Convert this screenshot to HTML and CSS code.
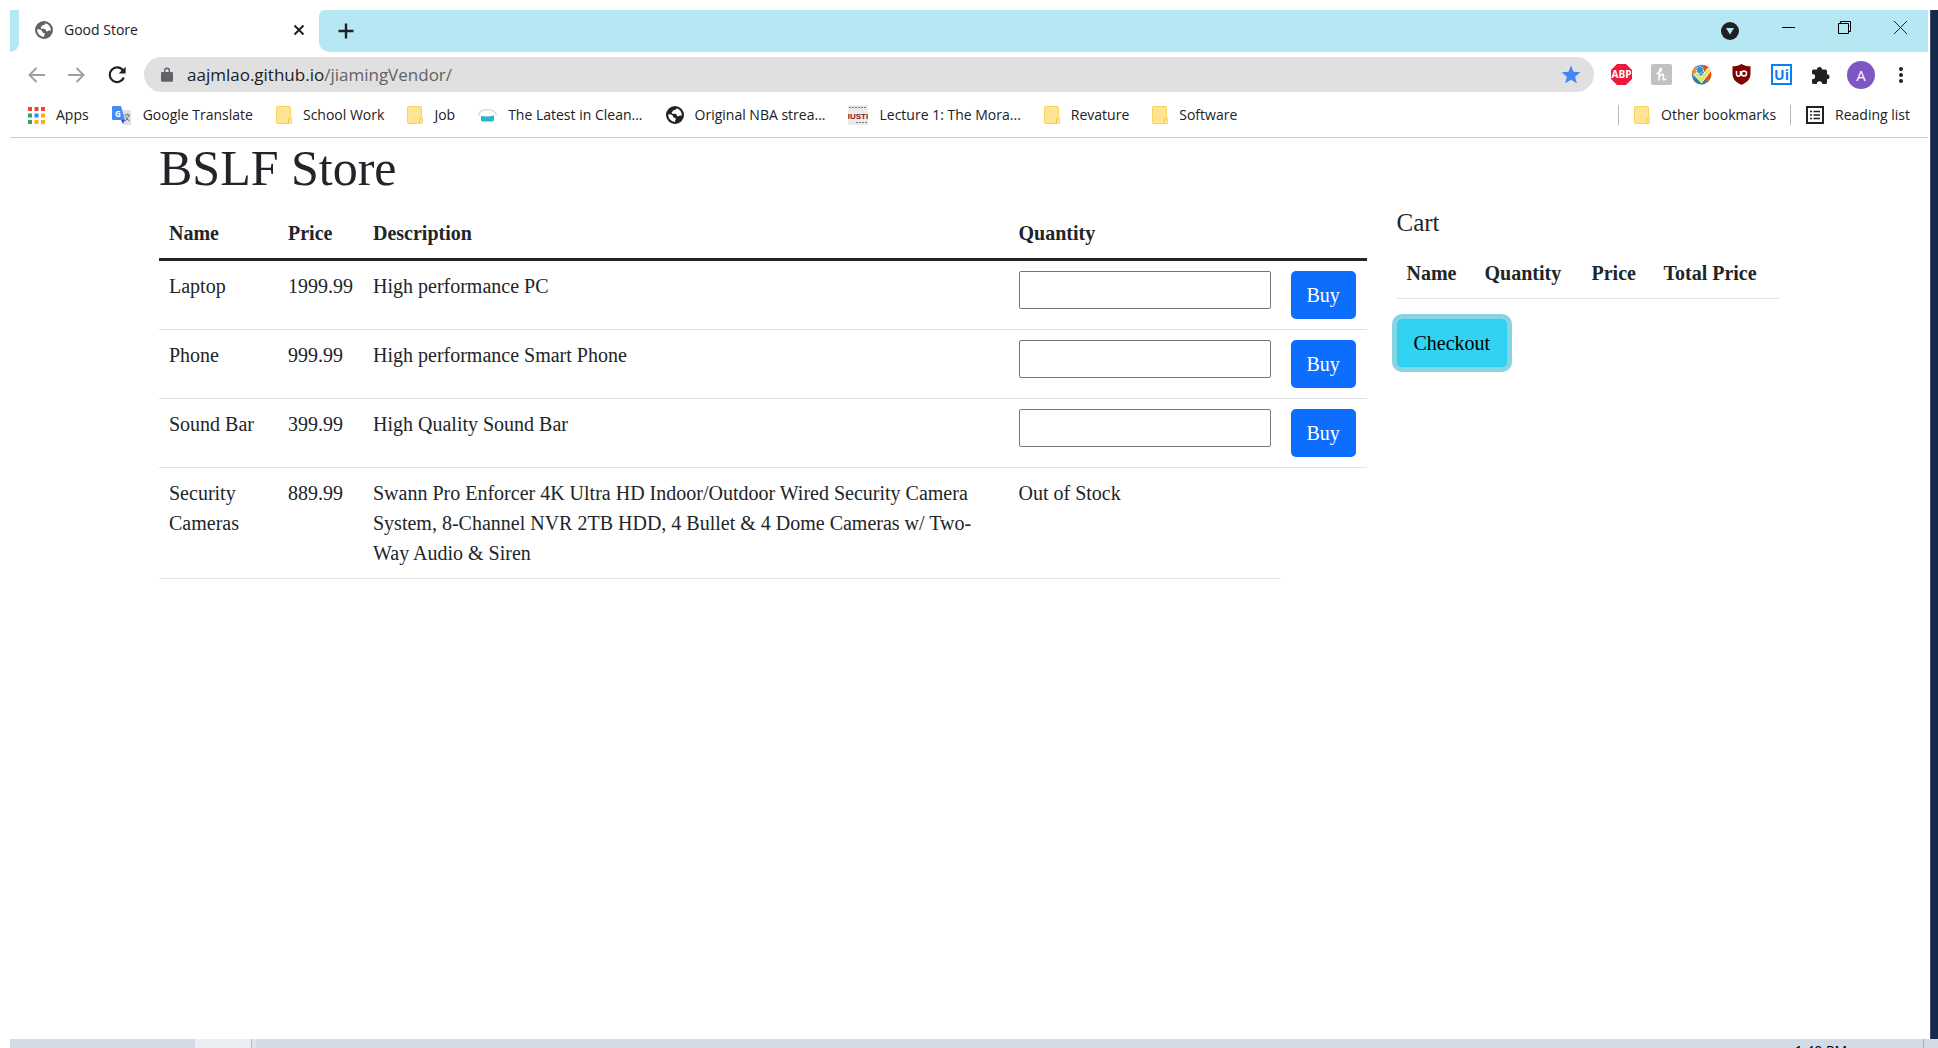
FILE: index.html
```html
<!DOCTYPE html>
<html lang="en">
<head>
<meta charset="utf-8">
<title>Good Store</title>
<link rel="stylesheet" href="styles.css">
</head>
<body>
<svg class="defs" aria-hidden="true">
  <symbol id="globe" viewBox="0 0 18 18"><circle cx="9" cy="9" r="9" fill="currentColor"/><path d="M10.5 2.2c-.3 1.500-1.500 1.800-3 2.100-.8.200-.6 1.500-1.500 1.800-.5.300-.5 1.600.5 1.700 1.500.2 3-.2 4 .7.800.9.200 1.800 1.300 2 1 .1 1.200-.9 2.200-1 .9 0 1.500.2 1.800.1A7 7 0 0 0 10.500 2.200ZM2.200 8.200c1.600 0 3.500.1 4.400 1.200.9 1 .6 1.900 1.500 2.300.9.300 1.900.2 1.700 1.400-.2 1-.9 1.200-.7 2.800A7 7 0 0 1 2.200 8.200Z" fill="#fff"/></symbol>
  <symbol id="folder" viewBox="0 0 16 18"><path d="M1.500.5h12a1 1 0 0 1 1 1V12h.5a.8.800 0 0 1 .5.800v3.700a1 1 0 0 1-1 1h-13a1 1 0 0 1-1-1v-15a1 1 0 0 1 1-1Z" fill="#ffe493" stroke="#f6d35f"/><path d="M12.500 17v-3.500q0-1.500 1.500-1.500" fill="none" stroke="#f0c843"/></symbol>
</svg>
<div class="desktop">
  <div class="window">
    <header class="chrome">
      <div class="tabstrip">
        <div class="edge"></div>
        <div class="tab">
          <svg class="i18 gray"><use href="#globe"/></svg>
          <span class="tab-title">Good Store</span>
          <button class="icon-btn" aria-label="Close tab"><svg width="12" height="12" viewBox="0 0 12 12"><path d="M1.500 1.500l9 9M10.500 1.500l-9 9" stroke="#202124" stroke-width="2"/></svg></button>
        </div>
        <div class="strip">
          <button class="icon-btn" aria-label="New tab"><svg width="16" height="16" viewBox="0 0 16 16"><path d="M8 .5v15M.5 8h15" stroke="#202124" stroke-width="2.400"/></svg></button>
          <div class="caption">
            <button class="icon-btn" aria-label="Search tabs"><svg width="18" height="18" viewBox="0 0 18 18"><circle cx="9" cy="9" r="9" fill="#202124"/><path d="M5 6h8l-4 6.500Z" fill="#b5e8f2"/></svg></button>
            <button class="icon-btn up" aria-label="Minimize"><svg width="13" height="13" viewBox="0 0 13 13"><path d="M0 6.500h13" stroke="#000"/></svg></button>
            <button class="icon-btn up" aria-label="Restore"><svg width="13" height="13" viewBox="0 0 13 13"><path d="M.5 2.500h10v10H.5ZM2.500 2.500v-2h10v10h-2" fill="none" stroke="#000"/></svg></button>
            <button class="icon-btn up" aria-label="Close"><svg width="13" height="13" viewBox="0 0 13 13"><path d="M0 0l13 13M13 0L0 13" stroke="#222"/></svg></button>
          </div>
        </div>
      </div>
      <div class="toolbar">
        <div class="nav">
          <button class="icon-btn" aria-label="Back"><svg width="17" height="16" viewBox="0 0 17 16"><path d="M17 8H2M8.500 1l-7 7 7 7" fill="none" stroke="#a0a0a0" stroke-width="2"/></svg></button>
          <button class="icon-btn" aria-label="Forward"><svg width="17" height="16" viewBox="0 0 17 16"><path d="M0 8h15M8.500 1l7 7-7 7" fill="none" stroke="#a0a0a0" stroke-width="2"/></svg></button>
          <button class="icon-btn" aria-label="Reload"><svg width="18" height="18" viewBox="0 0 18 18"><path d="M15 4.500A7.300 7.300 0 1 0 15.800 11.500" fill="none" stroke="#202124" stroke-width="2.200"/><path d="M17.600.8v6.800h-7Z" fill="#202124"/></svg></button>
        </div>
        <div class="address">
          <svg width="12" height="15" viewBox="0 0 12 15"><path d="M1.500 5H3V3.500a3 3 0 0 1 6 0V5h1.500A1.300 1.300 0 0 1 12 6.300v7.200a1.300 1.300 0 0 1-1.300 1.300H1.300A1.300 1.300 0 0 1 0 13.500V6.300A1.300 1.300 0 0 1 1.500 5ZM4.400 5h3.200V3.500a1.600 1.600 0 0 0-3.200 0Z" fill="#5f6368"/></svg>
          <span class="url">aajmlao.github.io<span class="path">/jiamingVendor/</span></span>
          <svg width="20" height="19" viewBox="0 0 20 19"><path d="M10 .5l2.500 6.300 6.800.5-5.200 4.400 1.700 6.600L10 14.700l-5.800 3.600 1.700-6.600L.7 7.300l6.800-.5Z" fill="#4285f4"/></svg>
        </div>
        <div class="extensions">
          <svg width="21" height="21" viewBox="0 0 21 21"><path d="M6 0h9l6 6v9l-6 6H6l-6-6V6Z" fill="#f0173c"/><text x="10.500" y="14" text-anchor="middle" class="g-abp">ABP</text></svg>
          <svg width="21" height="21" viewBox="0 0 21 21"><rect width="21" height="21" rx="2" fill="#c2c2c2"/><path d="M5.500 9.500c3 0 6-3.500 4.500-4.800C8.500 4 8 9 8 16.500M8 13.500c1-3 4.500-4.500 4.500-2 0 2-1.200 4.500.2 4.500 1 0 1.800-.8 2.300-1.500" fill="none" stroke="#fff" stroke-width="1.600"/></svg>
          <svg width="21" height="21" viewBox="0 0 21 21"><circle cx="10.500" cy="10.500" r="9.800" fill="#348bc6"/><path d="M13 1a9.800 9.800 0 0 1 3 17.500L13 9Z" fill="#e84c1f"/><path d="M2 15a9.800 9.800 0 0 0 12 4.800l1-5Z" fill="#2f7f9a"/><path d="M1 9a9.800 9.800 0 0 1 4-7l2 6-5 5Z" fill="#ef8b35"/><circle cx="9" cy="6" r="3.500" fill="#3b8fd0" stroke="#d7ecfa" stroke-dasharray="2 1"/><path d="M3 10.500l3-2 4 4.500L17 4l3 2.500L10.500 19Z" fill="#dce75a" stroke="#f7f9d8"/></svg>
          <svg width="19" height="21" viewBox="0 0 19 21"><path d="M9.500 0C12 1.600 15 2.300 18.500 2.300V10c0 5-3.500 8.500-9 10.800C4 18.500.5 15 .5 10V2.300C4 2.300 7 1.600 9.500 0Z" fill="#800000"/><path d="M4.500 7v3a2 2 0 0 0 4 .3V7" fill="none" stroke="#fff" stroke-width="1.500"/><circle cx="12" cy="9.500" r="2.500" fill="none" stroke="#fff" stroke-width="1.500"/></svg>
          <svg width="21" height="21" viewBox="0 0 21 21"><rect x="1" y="1" width="19" height="19" fill="#fff" stroke="#0b7ff4" stroke-width="2"/><text x="10.500" y="16" text-anchor="middle" class="g-ui">Ui</text></svg>
          <svg width="18" height="18" viewBox="0 0 18 18"><path d="M5 3.500a2.500 2.500 0 0 1 5 0h3.500A1.500 1.500 0 0 1 15 5v3.200a2.500 2.500 0 0 1 0 5v3.300a1.500 1.500 0 0 1-1.500 1.500h-3.300a2.700 2.700 0 0 0-5.400 0H1.500A1.500 1.500 0 0 1 0 16.500v-3.300h.5a2.600 2.600 0 0 0 0-5.200H0V5a1.500 1.500 0 0 1 1.500-1.500Z" fill="#202124"/></svg>
          <button class="avatar">A</button>
          <button class="icon-btn" aria-label="Menu"><svg width="4" height="16" viewBox="0 0 4 16"><g fill="#202124"><circle cx="2" cy="2" r="2"/><circle cx="2" cy="8" r="2"/><circle cx="2" cy="14" r="2"/></g></svg></button>
        </div>
      </div>
      <nav class="bookmarks">
        <a href="#" class="bm"><svg width="17" height="17" viewBox="0 0 17 17"><path d="M0 0h4v4H0zM6.500 0h4v4h-4zM13 0h4v4h-4z" fill="#f44336"/><path d="M0 6.500h4v4H0zM0 13h4v4H0z" fill="#34a360"/><path d="M6.500 6.500h4v4h-4z" fill="#2196f3"/><path d="M13 6.500h4v4h-4zM6.500 13h4v4h-4zM13 13h4v4h-4z" fill="#fbaf0b"/></svg><span>Apps</span></a>
        <a href="#" class="bm"><svg width="20" height="19" viewBox="0 0 20 19"><path d="M8 4h11v15h-7Z" fill="#dfe1e5"/><path d="M1 0h8l4 14H1a1 1 0 0 1-1-1V1a1 1 0 0 1 1-1Z" fill="#4889f4"/><path d="M9 14h4l-2 4Z" fill="#2b56c4"/><text x="6" y="11" text-anchor="middle" class="g-tr">G</text><path d="M12.500 9H18M15 7.500V9M17 9q-1 4-4 6M13.500 10.500q1 3 4 4.500" fill="none" stroke="#607988"/></svg><span>Google Translate</span></a>
        <a href="#" class="bm"><svg width="16" height="18"><use href="#folder"/></svg><span>School Work</span></a>
        <a href="#" class="bm"><svg width="16" height="18"><use href="#folder"/></svg><span>Job</span></a>
        <a href="#" class="bm"><svg width="19" height="13" viewBox="0 0 19 13"><path d="M.5 6.500Q2 .7 9.500.7T18.500 6.500" fill="none" stroke="#d5d5d5" stroke-width="1.300"/><path d="M3 7q6 1 13-.5V11q0 1.500-2 1.500H5q-2 0-2-1.500Z" fill="#2bb5c4"/></svg><span>The Latest in Clean...</span></a>
        <a href="#" class="bm"><svg class="i18"><use href="#globe"/></svg><span>Original NBA strea...</span></a>
        <a href="#" class="bm"><svg width="20" height="20" viewBox="0 0 20 20"><rect width="20" height="20" fill="#ebebeb"/><path d="M1 2.500h17M8 17.500h11" stroke="#777" stroke-dasharray="2 1"/><text x="10" y="14" text-anchor="middle" class="g-just">IUSTI</text></svg><span>Lecture 1: The Mora...</span></a>
        <a href="#" class="bm"><svg width="16" height="18"><use href="#folder"/></svg><span>Revature</span></a>
        <a href="#" class="bm"><svg width="16" height="18"><use href="#folder"/></svg><span>Software</span></a>
        <div class="bm-right">
          <a href="#" class="bm"><svg width="16" height="18"><use href="#folder"/></svg><span>Other bookmarks</span></a>
          <a href="#" class="bm"><svg width="18" height="18" viewBox="0 0 18 18"><path d="M1 1h16v16H1Z" fill="none" stroke="#202124" stroke-width="2"/><path d="M4 5.500h2M4 9h2M4 12.500h2M7.500 5.500H14M7.500 9H14M7.500 12.500H14" stroke="#202124" stroke-width="1.600"/></svg><span>Reading list</span></a>
        </div>
      </nav>
    </header>
    <main class="container">
      <h1>BSLF Store</h1>
      <div class="row">
        <section class="products">
          <table class="table">
            <colgroup><col class="c-name"><col class="c-price"><col><col class="c-qty"><col class="c-buy"></colgroup>
            <thead><tr><th>Name</th><th>Price</th><th>Description</th><th>Quantity</th><th></th></tr></thead>
            <tbody>
              <tr><td>Laptop</td><td>1999.99</td><td>High performance PC</td><td><input type="text" class="qty" aria-label="Laptop quantity"></td><td><button class="btn primary">Buy</button></td></tr>
              <tr><td>Phone</td><td>999.99</td><td>High performance Smart Phone</td><td><input type="text" class="qty" aria-label="Phone quantity"></td><td><button class="btn primary">Buy</button></td></tr>
              <tr><td>Sound Bar</td><td>399.99</td><td>High Quality Sound Bar</td><td><input type="text" class="qty" aria-label="Sound Bar quantity"></td><td><button class="btn primary">Buy</button></td></tr>
              <tr><td>Security Cameras</td><td>889.99</td><td>Swann Pro Enforcer 4K Ultra HD Indoor/Outdoor Wired Security Camera System, 8-Channel NVR 2TB HDD, 4 Bullet &amp; 4 Dome Cameras w/ Two-Way Audio &amp; Siren</td><td>Out of Stock</td></tr>
            </tbody>
          </table>
        </section>
        <aside class="cart">
          <h2>Cart</h2>
          <table class="table">
            <colgroup><col class="k-name"><col class="k-qty"><col class="k-price"><col></colgroup>
            <thead><tr><th>Name</th><th>Quantity</th><th>Price</th><th>Total Price</th></tr></thead>
          </table>
          <button class="btn info">Checkout</button>
        </aside>
      </div>
    </main>
  </div>
  <div class="wallpaper"></div>
</div>
<footer class="taskbar"><div class="task-left"></div><div class="task-active"></div><time class="clock">1:40 PM</time><div class="show-desktop"></div></footer>
</body>
</html>
```
FILE: styles.css
```css
* { box-sizing: border-box; }
body {
  margin: 0;
  padding: 10px 0 0 10px;
  height: 100vh;
  overflow: hidden;
  display: flex;
  flex-direction: column;
  background: #fff;
  color: #212529;
  font: 20px/30px "Liberation Serif", "Times New Roman", serif;
}
svg { display: block; flex: none; }
.defs { position: absolute; width: 0; height: 0; }
.i18 { width: 18px; height: 18px; }
.gray { color: #5f6368; }
.desktop { flex: 1; min-height: 0; display: flex; gap: 2px; }
.window { flex: 1; min-width: 0; }
.wallpaper { width: 8px; background: #132a4c; border-left: 1px solid #3d4f6d; }

.chrome {
  font: 14px/20px "Open Sans", "Noto Sans", sans-serif;
  color: #202124;
  border-bottom: 1px solid #ccc;
}
.icon-btn { display: block; padding: 0; border: 0; background: none; }
.tabstrip { display: flex; height: 42px; background: #fff; }
.edge { width: 9px; background: #b5e8f2; border-bottom-right-radius: 9px; }
.tab { width: 300px; padding: 0 14px 2px 16px; display: flex; align-items: center; gap: 11px; }
.tab-title { flex: 1; }
.strip {
  flex: 1;
  padding: 0 21px 0 19px;
  display: flex;
  justify-content: space-between;
  align-items: center;
  background: #b5e8f2;
  border-radius: 6px 0 0 10px;
}
.caption { display: flex; align-items: center; gap: 43px; }
.caption .up { padding-bottom: 7px; }

.toolbar { height: 45px; padding: 0 7px 0 18px; display: flex; align-items: center; }
.nav { width: 116px; display: flex; gap: 23px; }
.address {
  flex: 1;
  height: 35px;
  padding: 0 13px 0 17px;
  display: flex;
  align-items: center;
  gap: 14px;
  border-radius: 18px;
  background: #e0e0e0;
}
.url { flex: 1; font-size: 17px; }
.path { color: #5f6368; }
.extensions {
  margin-left: 7px;
  display: grid;
  grid-template-columns: repeat(8, 40px);
  place-items: center;
}
.avatar {
  width: 28px;
  height: 28px;
  padding: 0;
  border: 0;
  border-radius: 50%;
  background: #7e57c2;
  color: #fff;
  font: 15px/28px "Open Sans", sans-serif;
}
.g-abp { font: bold 10px "Open Sans", sans-serif; fill: #fff; }
.g-ui { font: bold 14px "Open Sans", sans-serif; fill: #0b7ff4; }
.g-tr { font: bold 8px "Open Sans", sans-serif; fill: #fff; }
.g-just { font: bold 8px "Liberation Sans Narrow", "Liberation Sans", sans-serif; fill: #8b1018; }

.bookmarks { height: 40px; padding: 0 18px 4px 18px; display: flex; align-items: center; gap: 23px; }
.bm { display: flex; align-items: center; gap: 11px; color: #202124; text-decoration: none; white-space: nowrap; }
.bm-right { margin-left: auto; display: flex; gap: 14px; }
.bm-right .bm { border-left: 1px solid #b8b8b8; padding-left: 15px; }

.container { max-width: 1650px; margin: 0 auto; padding: 0 15px; }
h1 { margin: 0 0 10px; font-size: 50px; line-height: 60px; font-weight: 400; }
h2 { margin: 0 0 10px; font-size: 25px; line-height: 30px; font-weight: 400; }
.row { display: flex; margin: 0 -15px; }
.products { width: 75%; padding: 0 15px; }
.cart { width: 25%; padding: 0 15px; }
.table { width: 100%; margin-bottom: 20px; table-layout: fixed; border-collapse: separate; border-spacing: 0; }
.table th, .table td { padding: 10px; text-align: left; vertical-align: top; border-bottom: 1px solid #dee2e6; }
.products .table th { border-bottom: 3px solid #212529; }
.c-name { width: 119px; }
.c-price { width: 85px; }
.c-qty { width: 272px; }
.c-buy { width: 86px; }
.k-name { width: 78px; }
.k-qty { width: 107px; }
.k-price { width: 72px; }
.qty { display: block; width: 100%; height: 38px; padding: 2px; border: 1px solid #767676; border-radius: 2px; font: inherit; background: #fff; }
.btn { display: block; height: 48px; padding: 0 16px; border: 0; border-radius: 5px; font: inherit; white-space: nowrap; }
.primary { background: #0d6efd; color: #fff; }
.info { background: #31d2f2; color: #000; border: 1px solid #25cff2; box-shadow: 0 0 0 5px #86d5e4; }

.taskbar { height: 9px; display: flex; overflow: hidden; background: #d3dbe6; }
.task-left { width: 185px; }
.task-active { width: 61px; background: #ebeff4; border-right: 4px solid #e0e6ee; box-shadow: inset -1px 0 #b3bac5; }
.clock { margin: 4px 76px 0 auto; color: #000; font: 14px/16px "Open Sans", sans-serif; }
.show-desktop { width: 15px; border-left: 1px solid #a6aeb9; }
```
